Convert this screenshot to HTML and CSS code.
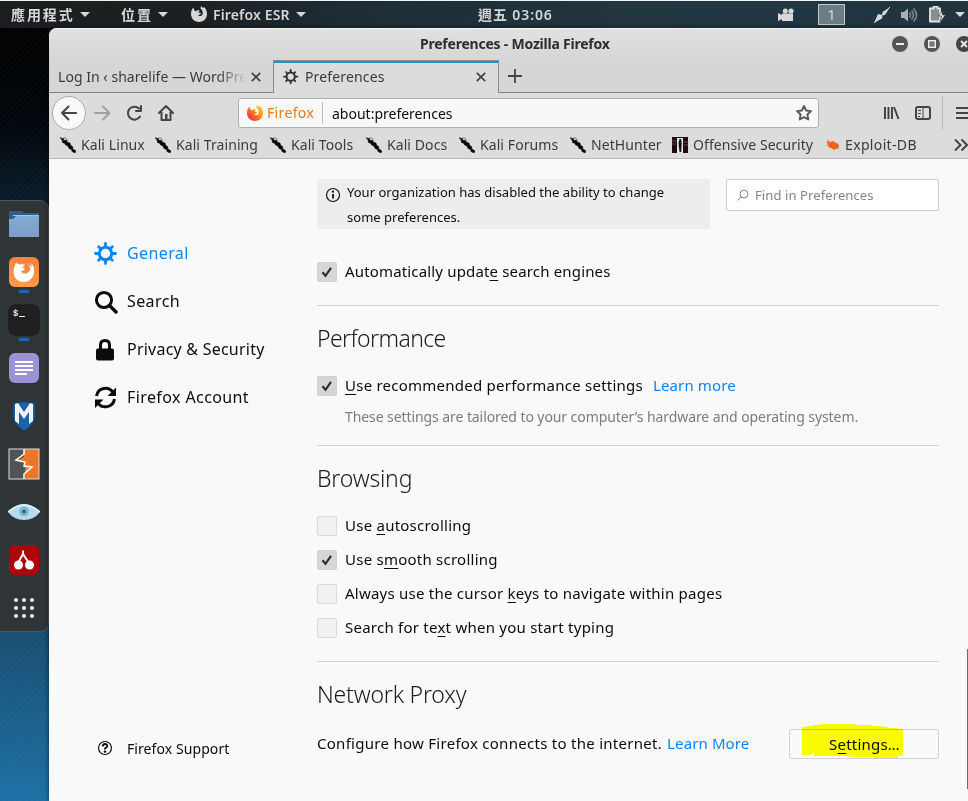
FILE: index.html
```
<!DOCTYPE html>
<html lang="en">
<head>
<meta charset="utf-8">
<title>Preferences - Mozilla Firefox</title>
<link rel="stylesheet" href="styles.css">
</head>
<body>
<svg class="defs" width="0" height="0">
  <defs>
    <linearGradient id="folder" x1="0" y1="0" x2="0" y2="1"><stop offset="0" stop-color="#82aad3"/><stop offset="1" stop-color="#7e9cc8"/></linearGradient>
    <linearGradient id="orange" x1="0" y1="0" x2="0" y2="1"><stop offset="0" stop-color="#f8803e"/><stop offset="1" stop-color="#fb9a4b"/></linearGradient>
    <linearGradient id="flame" x1="1" y1="0" x2="0" y2="1"><stop offset="0" stop-color="#ffe226"/><stop offset=".45" stop-color="#ff8a16"/><stop offset="1" stop-color="#f0125e"/></linearGradient>
    <linearGradient id="shield" x1="0" y1="0" x2="1" y2="1"><stop offset="0" stop-color="#1b5d9d"/><stop offset="1" stop-color="#1c66b4"/></linearGradient>
    <symbol id="gear" viewBox="0 0 24 24"><circle cx="11.500" cy="11.500" r="6.200" fill="none" stroke="currentColor" stroke-width="3"/><path d="M11.500 4.500V1.500M11.500 18.500v3M4.500 11.500h-3M18.500 11.500h3M6.500 6.500 4.700 4.700M16.500 16.500l1.800 1.800M16.500 6.500l1.800-1.800M6.500 16.500l-1.800 1.800" stroke="currentColor" stroke-width="2.800" stroke-linecap="round"/></symbol>
    <symbol id="kali" viewBox="0 0 16 16"><path d="M0 .5 2 1.500 4 1.200 3 2.500l2 1L6.500 3 7 5l3 1 .5 2L13 10l-.5 1.500L16 14l-1 2-3-1.500-.5-2-2.500-1L8 9 5.500 8 5 6.500 2.500 5.500 2 3Z" fill="#050505" stroke="#050505" stroke-width=".5"/><path d="M5 .5 8.500 4M4 0l2.500 1.500" stroke="#777" stroke-width=".7"/></symbol>
    <symbol id="fox" viewBox="0 0 16 16"><path d="M5 5.500C6 4 8 4 9 5c-1 .3-1.600 1-1.800 1.600L10 7c-.3 1.500-2 1.500-2.800 2.500 1.600 1.300 4.200.5 4.500-2C12 5.500 11 3.500 9.500 2.500L10 0l2 2 1-1c2 2 3 4 3 7 0 5-4 8-8 8S0 13 0 8c0-3 1-5 2.500-6.500L3 4Z"/></symbol>
    <symbol id="close" viewBox="0 0 10 10"><path d="m.8.8 8.400 8.400M9.200.8.800 9.200" stroke="#444" stroke-width="1.700"/></symbol>
    <symbol id="check" viewBox="0 0 20 20"><path d="m5.500 10.300 3 3.500 5.500-8" fill="none" stroke="#2c2c2c" stroke-width="2.100"/></symbol>
  </defs>
</svg>
<header class="panel">
  <span class="menu menu-apps">應用程式<i class="caret"></i></span>
  <span class="menu menu-places">位置<i class="caret"></i></span>
  <span class="menu menu-app"><svg class="s16" fill="#d6d6d6"><use href="#fox"/></svg><b>Firefox ESR</b><i class="caret"></i></span>
  <span class="clock">週五 03:06</span>
  <span class="tray">
    <svg width="16" height="16" viewBox="0 0 16 16" fill="#d6d8d9"><circle cx="7.300" cy="4" r="2.500"/><circle cx="13" cy="4" r="2.600"/><path d="M0 6 4 8V6.500h11V14H4v-2L0 14Z"/></svg>
    <span class="workspace">1</span>
    <svg width="16" height="16" viewBox="0 0 16 16" fill="#d6d8d9"><path d="M16 0 11 8 8 8.500 8.500 5ZM0 16l4-9 3 .5L8.500 9 8 11.500Z"/><path d="M0 16 16 0" stroke="#d6d8d9"/></svg>
    <svg width="17" height="16" viewBox="0 0 17 16"><path d="M0 5h3l4-3.500v13L3 11H0Z" fill="#a8afb2"/><path d="M8.500 5.500q2 2.500 0 5M10.500 3.500q4 4.500 0 9M12.500 1.500q6 6.500 0 13" fill="none" stroke="#7f898e" stroke-width="1.500"/></svg>
    <svg width="17" height="17" viewBox="0 0 17 17"><path d="M3 2.500h1.500V.5h4v2h2.500v13H1v-13Z" fill="#858d91" stroke="#e4e4e4" stroke-width="1.800"/><path d="m13 5-3.500 5h3l-1.500 6 5.500-7h-3Z" fill="#e8e8e8" stroke="#28363e" stroke-width=".6"/></svg>
    <i class="caret"></i>
  </span>
</header>

<div class="desktop">
  <aside class="launcher">
    <nav class="dock">
      <svg viewBox="0 0 32 32"><path d="M1 3h13l2 2h15v10H1Z" fill="#315f87"/><path d="M1 11h4l3-3h23v21H1Z" fill="url(#folder)"/><path d="M5 7.500h26" stroke="#a9c2dc"/></svg>
      <svg viewBox="0 0 32 32"><rect x="1" y="1" width="30" height="30" rx="6" fill="url(#orange)"/><path d="M8 7q2 1 5 1.500 2-.5 4 .5-1 2-3 2l3 2q-1 2-4 2c2 4 8 3 9-1 1-3-1-4-2-6l4 3-1-4c7 7 2 19-7 19-10 0-13-10-8-19Z" fill="#fff"/></svg>
      <svg viewBox="0 0 32 32"><rect x="1" y="1" width="30" height="30" rx="6" fill="#202020" stroke="#171717"/><text x="5" y="12" class="prompt">$</text><path d="M11 12.500h6" stroke="#eee"/></svg>
      <svg viewBox="0 0 32 32"><rect x="1" y="1" width="30" height="30" rx="6" fill="#9b93d3"/><path d="M7 10h18M7 14h18M7 18h18M7 22h12" stroke="#fff" stroke-width="1.800"/></svg>
      <svg viewBox="0 0 32 32"><path d="M5 3q11-3 22 0v15q-2 7-11 13Q7 25 5 18Z" fill="url(#shield)" stroke="#123d6e"/><path d="M7 21V4l3-1 6 9 6-9 3 1v17l-4 3V12l-5 7-5-7v12Z" fill="#edf2f8"/></svg>
      <svg viewBox="0 0 32 32"><path d="M1 1h30v30H1Z" fill="#ed7628"/><path d="M1 1h15v8l-8 4 9 2v16H1Z" fill="#515253"/><path d="M16 1v5L8 12l9 2-1 4 8 1-8 7v5" fill="none" stroke="#fff" stroke-width="1.500"/><rect x="1" y="1" width="30" height="30" fill="none" stroke="#ddd"/></svg>
      <svg viewBox="0 0 32 32"><path d="M0 16q8-8 16-8t16 8q-6 8-16 8T0 16Z" fill="#b5dced"/><path d="M0 16q8-7 16-7t16 7" fill="none" stroke="#e7f4f9" stroke-width="1.500"/><circle cx="16" cy="15.500" r="5" fill="#82b6d2"/><circle cx="16" cy="15.500" r="2" fill="#3d647a"/></svg>
      <svg viewBox="0 0 32 32"><rect x="1" y="1" width="30" height="30" rx="6" fill="#ad0509"/><path d="M15 6.500V10l-5 9M15 10l6 9" fill="none" stroke="#fff" stroke-width="2"/><circle cx="10.500" cy="21" r="4.500" fill="#fff"/><circle cx="21.500" cy="21" r="4.500" fill="#fff"/></svg>
      <svg viewBox="0 0 32 32" fill="#efefed"><circle cx="8" cy="8" r="2"/><circle cx="16" cy="8" r="2"/><circle cx="24" cy="8" r="2"/><circle cx="8" cy="16" r="2"/><circle cx="16" cy="16" r="2"/><circle cx="24" cy="16" r="2"/><circle cx="8" cy="24" r="2"/><circle cx="16" cy="24" r="2"/><circle cx="24" cy="24" r="2"/></svg>
    </nav>
  </aside>

  <section class="window">
    <div class="titlebar"><b class="window-title">Preferences - Mozilla Firefox</b>
      <svg class="controls" width="80" height="16" viewBox="0 0 80 16"><g fill="#555"><circle cx="8" cy="8" r="8"/><circle cx="40" cy="8" r="8"/><circle cx="72" cy="8" r="8" fill="#444"/></g><path d="M4 8h8M69 5l6 6M75 5l-6 6" stroke="#eee" stroke-width="1.800"/><rect x="36.700" y="4.700" width="6.600" height="6.600" fill="#777" stroke="#eee" stroke-width="1.400"/></svg>
    </div>
    <div class="tabs">
      <div class="tab"><span class="tab-label fade">Log In ‹ sharelife — WordPre</span><svg class="s10"><use href="#close"/></svg></div>
      <div class="tab active"><svg class="s16 dark"><use href="#gear"/></svg><span class="tab-label">Preferences</span><svg class="s10"><use href="#close"/></svg></div>
      <div class="tab-rest"><svg width="14" height="14" viewBox="0 0 14 14"><path d="M7 0v14M0 7h14" stroke="#444" stroke-width="1.800"/></svg></div>
    </div>
    <div class="toolbar">
      <svg class="nav-icons" width="130" height="36" viewBox="0 0 130 36" fill="none" stroke="#444" stroke-width="2" stroke-linecap="round" stroke-linejoin="round"><circle cx="18" cy="18" r="16.500" fill="#f9f9f9" stroke="#aaa" stroke-width="1"/><path d="M25 18H11M17.500 11.500 11 18l6.500 6.500"/><path d="M44 18h14M52 11.500l6.500 6.500-6.500 6.500" stroke="#a0a0a0"/><path d="M89 21.500A6.500 6.500 0 1 1 88 13.500M90 11v5h-5"/><path d="m108 18 7-7 7 7M110.500 17.500V25h9v-7.500"/><path d="M114 19h2.500v5H114Z" fill="#444" stroke="none"/></svg>
      <div class="urlbar"><svg class="s16" fill="url(#flame)"><use href="#fox"/></svg><span class="identity">Firefox</span><span class="url">about:preferences</span><svg width="16" height="16" viewBox="0 0 16 16"><path d="m8 1 2.100 4.500 4.900.6-3.600 3.400.9 5L8 12.100l-4.300 2.400.9-5L1 6.100l4.900-.6Z" fill="none" stroke="#555" stroke-width="1.800" stroke-linejoin="round"/></svg></div>
      <svg class="tools" width="88" height="34" viewBox="0 0 88 34" fill="none" stroke="#444" stroke-width="2"><path d="M4 11v12M7.500 11v12M11 11v12M13 11l4.500 12"/><rect x="35" y="11" width="14" height="12" rx="2"/><path d="M42 11v12M37 14.500h3M37 17.500h3M37 20.500h2" stroke-width="1"/><path d="M61.500 0v34" stroke="#bbb" stroke-width="1"/><path d="M75 12h14M75 17h14M75 22h14"/></svg>
    </div>
    <div class="bookmarks">
      <span><svg class="s16"><use href="#kali"/></svg>Kali Linux</span>
      <span><svg class="s16"><use href="#kali"/></svg>Kali Training</span>
      <span><svg class="s16"><use href="#kali"/></svg>Kali Tools</span>
      <span><svg class="s16"><use href="#kali"/></svg>Kali Docs</span>
      <span><svg class="s16"><use href="#kali"/></svg>Kali Forums</span>
      <span><svg class="s16"><use href="#kali"/></svg>NetHunter</span>
      <span><svg class="s16" viewBox="0 0 16 16"><path d="M0 0h16v16H0Z" fill="#210b10"/><path d="M0 4h5M11 5h5M0 7h4M12 8h4" stroke="#75606a" stroke-width=".8"/><path d="M5 1h6v15H5Z" fill="#e5e4e4"/><path d="M7.500 2h1.500l.7 4-.5 9H7.500L6.500 6Z" fill="#161214"/></svg>Offensive Security</span>
      <span class="exploit"><svg class="s16" viewBox="0 0 16 16"><path d="M2 3.500 5 5l3-1 3 2 3 2 0 2-2 1.500L9 13 7 11.500 4 10.500 3 8Z" fill="#ec6519"/><path d="m1 5 13 7M3 2.500l2 7M13 5l-5 6M1 8l5 2" stroke="#ec6519" stroke-width=".6"/></svg>Exploit-DB</span>
      <svg width="14" height="12" viewBox="0 0 14 12"><path d="m1 .5 5.500 5.500L1 11.500M7.500.5 13 6l-5.500 5.500" fill="none" stroke="#444" stroke-width="2"/></svg>
    </div>

    <div class="page">
      <nav class="categories">
        <a class="category selected"><svg><use href="#gear"/></svg><span>General</span></a>
        <a class="category"><svg viewBox="0 0 24 24" fill="none" stroke="currentColor"><circle cx="10" cy="10" r="7.600" stroke-width="3"/><path d="m15.500 15.500 6.500 6.500" stroke-width="3.400" stroke-linecap="round"/></svg><span>Search</span></a>
        <a class="category privacy"><svg viewBox="0 0 24 24"><path d="M6.500 11V7q0-4.500 4.500-4.500T15.500 7v4" fill="none" stroke="currentColor" stroke-width="3"/><rect x="2" y="10.500" width="18" height="12" rx="2" fill="currentColor"/></svg><span>Privacy &amp; Security</span></a>
        <a class="category"><svg viewBox="0 0 24 24"><path d="M2.500 10C4 1 15 0 19 6.500M20.500 13C19 22 8 23 4 17" fill="none" stroke="currentColor" stroke-width="3"/><path d="M22 1.500V10h-8.500ZM1 22v-8.500h8.500Z" fill="currentColor"/></svg><span>Firefox Account</span></a>
        <a class="support"><svg width="16" height="16" viewBox="0 0 16 16"><circle cx="8" cy="8" r="6.500" fill="none" stroke="#111" stroke-width="1.200"/><path d="M5.700 6.300Q6 4 8 4t2.200 2Q10.200 7.200 8 8.500v1" fill="none" stroke="#111" stroke-width="1.800"/><circle cx="8" cy="11.600" r="1.200"/></svg><span>Firefox Support</span></a>
      </nav>
      <main>
        <div class="page-head">
          <p class="notice"><svg width="16" height="16" viewBox="0 0 16 16"><circle cx="8" cy="8" r="6.500" fill="none" stroke="#111" stroke-width="1.200"/><path d="M8 7v4.500" stroke="#111" stroke-width="1.800"/><circle cx="8" cy="4.700" r="1.100"/></svg><span>Your organization has disabled the ability to change<br>some preferences.</span></p>
          <div class="find"><svg width="12" height="12" viewBox="0 0 12 12" fill="none" stroke="#888"><circle cx="7" cy="5" r="4"/><path d="M4.200 7.800.5 11.500"/></svg><span>Find in Preferences</span></div>
        </div>
        <div class="option first"><i class="box on"><svg><use href="#check"/></svg></i><span class="o1">Automatically updat<u>e</u> search engines</span></div>
        <section>
          <h2 class="h-perf">Performance</h2>
          <div class="option"><i class="box on"><svg><use href="#check"/></svg></i><span><u>U</u>se recommended performance settings</span><a class="link">Learn more</a></div>
          <p class="hint">These settings are tailored to your computer’s hardware and operating system.</p>
        </section>
        <section class="browsing">
          <h2>Browsing</h2>
          <div class="options">
            <div class="option"><i class="box"></i><span>Use <u>a</u>utoscrolling</span></div>
            <div class="option"><i class="box on"><svg><use href="#check"/></svg></i><span>Use s<u>m</u>ooth scrolling</span></div>
            <div class="option"><i class="box"></i><span>Always use the cursor <u>k</u>eys to navigate within pages</span></div>
            <div class="option"><i class="box"></i><span>Search for te<u>x</u>t when you start typing</span></div>
          </div>
        </section>
        <section class="proxy">
          <h2>Network Proxy</h2>
          <div class="proxy-row"><span class="proxy-text">Configure how Firefox connects to the internet.</span><a class="link">Learn More</a>
            <button><span>S<u>e</u>ttings…</span><svg class="marker" width="104" height="36" viewBox="0 0 104 36"><path d="M1 4h5V3h6V2h7V1h36v1h16v1h11v1h5v1h10v1h5v27h-5v2H74v-1H48v-1H13v-3h-2v1h-1v1H1Z" fill="#ff0"/></svg></button>
          </div>
        </section>
      </main>
      <i class="scrollbar"></i>
    </div>
  </section>
</div>
</body>
</html>
```
FILE: styles.css
```
* { box-sizing: border-box; }
body { margin: 0; width: 968px; height: 801px; overflow: hidden; font-family: "Noto Sans", "Open Sans", "Noto Sans CJK TC", sans-serif; color: #0c0c0d; font-size: 15px; }
h2, p { margin: 0; }
span, b, h2, a { white-space: nowrap; }
svg { display: block; flex: none; }
.defs { position: absolute; }
.s16 { width: 16px; height: 16px; }
.s10 { width: 10px; height: 10px; }
.dark { color: #333; }

.panel { height: 28px; border-top: 1px solid #eef4f3; background: linear-gradient(90deg, #1c1e1f 0, #1d2022 200px, #1d2b34 330px, #22363f 620px, #203642 820px, #22343d); display: flex; align-items: center; color: #d4d6d7; font-weight: 600; font-size: 14px; }
.menu { display: flex; align-items: center; height: 27px; flex: none; padding-bottom: 1px; }
.menu-apps { margin-left: 11px; width: 110px; letter-spacing: 1.9px; font-weight: 700; }
.menu-places { width: 70px; letter-spacing: 1.9px; font-weight: 700; }
.menu-app b { margin-left: 6px; width: 78px; font-weight: 600; letter-spacing: .15px; }
.caret { border: 5px solid transparent; border-top: 5px solid #d6d8d9; border-bottom: 0; margin-left: 5px; flex: none; }
.clock { margin-left: 172px; width: 75px; letter-spacing: .9px; padding-bottom: 1px; }
.tray { display: flex; align-items: center; margin-left: 225px; }
.workspace { width: 27px; height: 21px; border: 1px solid #c4cacc; background: #6d7d85; text-align: center; line-height: 19px; margin: 0 29px 0 24px; font-weight: 400; font-size: 15px; }
.tray svg + svg { margin-left: 11px; }
.tray .caret { margin-left: 9px; }

.desktop { display: flex; height: 773px; background: repeating-linear-gradient(135deg, rgba(255, 255, 255, .025) 0 2px, transparent 2px 4px), linear-gradient(#000 0, #01060c 100px, #061925 160px, #174d6f 600px, #1c70a5 773px); }
.launcher { width: 49px; padding-top: 172px; flex: none; }
.dock { width: 49px; height: 432px; border: 1px solid #505658; border-left: 0; border-radius: 0 9px 9px 0; background: #2f3537; padding: 7px 8px 0; display: flex; flex-direction: column; gap: 16px; background-image: linear-gradient(#2264ab, #2264ab), linear-gradient(#2264ab, #2264ab); background-repeat: no-repeat; background-size: 10px 3px; background-position: 19px 89px, 19px 137px; }
.dock svg { width: 32px; height: 32px; }
.prompt { font: 700 9px "Liberation Mono", monospace; fill: #eee; }

.window { width: 919px; border-radius: 8px 0 0 0; overflow: hidden; background: #f9f9fa; flex: none; box-shadow: 0 0 5px rgba(0, 0, 0, .6); }
.titlebar { height: 32px; border-top: 1px solid #f4f4f4; background: linear-gradient(#e1e1e1, #d6d6d6); display: flex; align-items: center; }
.window-title { margin-left: 371px; width: 472px; font-size: 14px; color: #2d2d2d; letter-spacing: -.22px; padding-bottom: 2px; flex: none; }
.controls { margin-bottom: 1px; }
.tabs { height: 33px; display: flex; background: #d6d6d6; color: #3a3a3a; font-size: 14px; }
.tab { width: 224px; border-bottom: 1px solid #828282; display: flex; align-items: center; padding: 1px 12px 0 9px; justify-content: space-between; }
.tab.active { width: 226px; background: #dcdcdc; border: 1px solid #8b8b8b; border-bottom: 0; box-shadow: inset 0 2px #218fd1; justify-content: flex-start; padding: 0 12px 0 9px; }
.active .tab-label { margin-left: 6px; flex: 1; padding-bottom: 2px; letter-spacing: .15px; }
.fade { width: 187px; letter-spacing: .04px; -webkit-mask-image: linear-gradient(90deg, #000 160px, transparent 189px); mask-image: linear-gradient(90deg, #000 160px, transparent 189px); }
.tab-rest { flex: 1; border-bottom: 1px solid #828282; padding: 9px 0 0 9px; }
.toolbar { height: 40px; background: #dcdcdc; display: flex; align-items: center; padding-left: 2px; }
.urlbar { width: 581px; flex: none; height: 30px; margin-left: 57px; border: 1px solid #b0b0b0; border-radius: 3px; background: #f8f8f8; display: flex; align-items: center; padding: 0 6px 0 8px; font-size: 14px; }
.identity { color: #e07d1a; width: 56px; height: 22px; line-height: 21px; margin-left: 4px; border-right: 1px solid #bbb; letter-spacing: .35px; }
.url { flex: 1; margin-left: 9px; font-size: 14px; }
.tools { margin-left: 62px; }
.bookmarks { height: 26px; background: #dcdcdc; border-bottom: 1px solid #b5b5b5; display: grid; grid-template-columns: 95px 115px 96px 93px 111px 102px 153px 129px 14px; padding: 0 0 1px 11px; align-items: center; font-size: 14px; color: #3b3b3b; letter-spacing: .08px; }
.bookmarks span { display: flex; align-items: center; gap: 5px; height: 24px; padding-bottom: 1px; }
.bookmarks .exploit { letter-spacing: .35px; gap: 4px; }

.page { height: 642px; display: flex; position: relative; background: #f9f9f9; }
.categories { width: 268px; padding: 71px 0 0 45px; flex: none; display: flex; flex-direction: column; font-size: 16px; letter-spacing: .4px; }
.category { height: 48px; display: flex; align-items: center; gap: 9px; padding-bottom: 1px; }
.category span { padding-bottom: 1px; }
.category svg { width: 24px; height: 24px; }
.privacy { letter-spacing: .23px; }
.selected { color: #0a84ff; }
.support { display: flex; align-items: center; gap: 14px; padding-left: 3px; height: 24px; margin-top: 314px; font-size: 14px; letter-spacing: .08px; }
main { width: 622px; padding-top: 20px; }
.page-head { display: flex; justify-content: space-between; height: 50px; }
.notice { width: 393px; background: #ededef; border-radius: 2px; display: flex; gap: 6px; padding-left: 8px; font-size: 13px; line-height: 25px; letter-spacing: .02px; }
.notice svg { margin-top: 8px; }
.notice span { padding-top: 1px; }
.find { width: 213px; height: 32px; border: 1px solid #cfcfcf; border-radius: 2px; background: #fff; color: #858585; display: flex; align-items: center; gap: 6px; padding-left: 10px; font-size: 13px; letter-spacing: .1px; }
.option { display: flex; height: 20px; align-items: center; }
.option span { margin-left: 8px; letter-spacing: .24px; padding-bottom: 2px; }
.option .o1 { letter-spacing: .16px; }
.first { margin-top: 33px; }
.box { width: 20px; height: 20px; border: 1px solid #dadadc; border-radius: 2px; background: #f1f1f1; flex: none; }
.box.on { background: #d6d6d6; border-color: #d0d0d0; }
.box svg { width: 20px; height: 20px; margin: -1px; }
u { text-decoration-thickness: 1px; text-underline-offset: 3px; text-decoration-skip-ink: none; }
main section { border-top: 1px solid #d2d2d2; margin-top: 23px; padding-top: 16px; }
h2 { font-weight: 300; font-size: 23px; line-height: 32px; margin-bottom: 22px; color: #1c1c1d; letter-spacing: -.2px; }
.h-perf { letter-spacing: -.6px; }
.link { color: #0a84ff; margin-left: 10px; padding-bottom: 2px; letter-spacing: .12px; }
.hint { margin: 10px 0 0 28px; font-size: 14px; line-height: 22px; color: #7c7c7c; white-space: nowrap; letter-spacing: -.08px; }
main .browsing { margin-top: 17px; }
.options { display: flex; flex-direction: column; gap: 14px; }
.proxy h2 { margin-bottom: 19px; }
.proxy-row { display: flex; align-items: center; height: 30px; }
.proxy-text { letter-spacing: .28px; padding-bottom: 2px; }
.proxy-row .link { margin-left: 5px; }
button { position: relative; margin-left: auto; width: 150px; height: 30px; background: #fafafa; border: 1px solid #d0d0d0; border-radius: 2px; font: inherit; color: #0c0c0d; padding: 0 0 1px 1px; letter-spacing: .2px; }
.marker { position: absolute; left: 11px; top: -7px; mix-blend-mode: multiply; }
.scrollbar { position: absolute; right: 0; top: 490px; width: 1px; height: 140px; background: #6d6d6d; }
```
